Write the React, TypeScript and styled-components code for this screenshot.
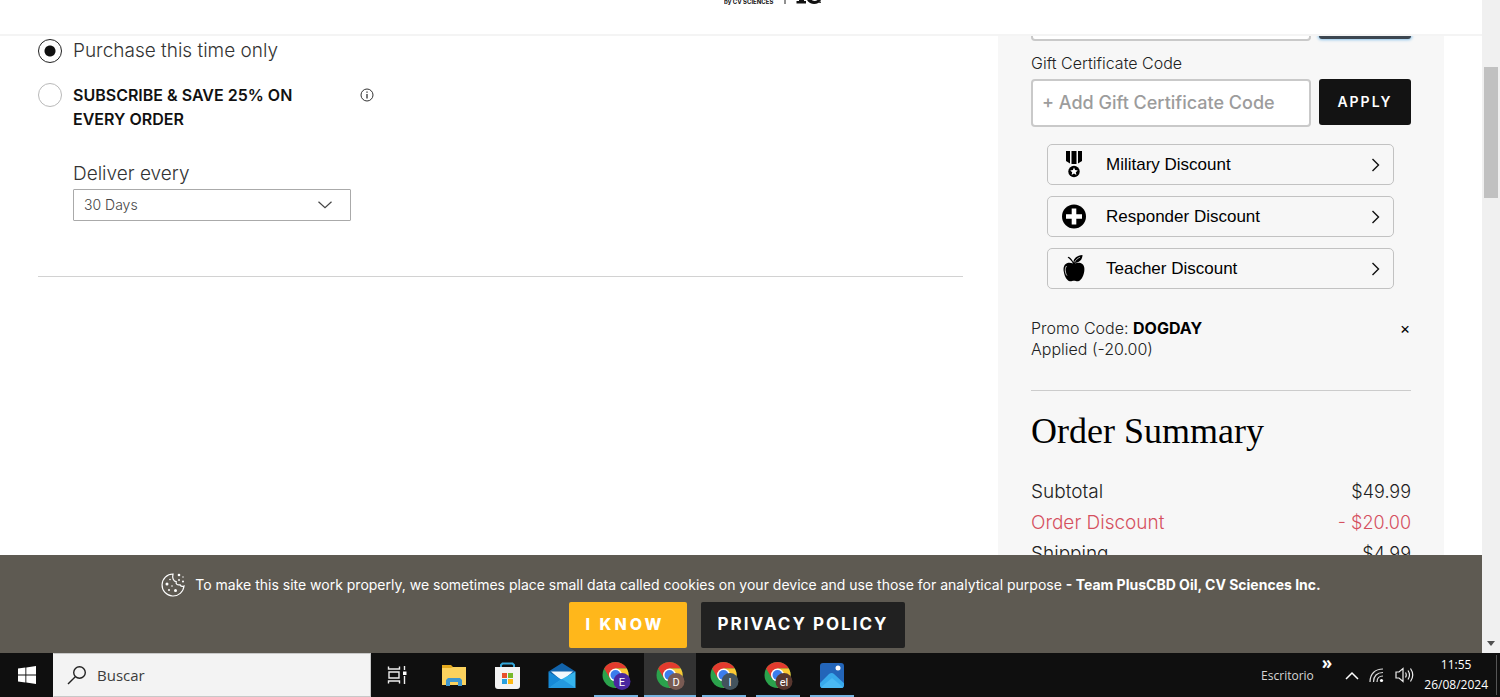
import React from "react";
import styled, { createGlobalStyle } from "styled-components";

const GlobalStyle = createGlobalStyle`
  *, *::before, *::after { box-sizing: border-box; }
  html, body { margin: 0; padding: 0; }
  body { background: #fff; color: #151515; font-family: Inter, "Liberation Sans", sans-serif; }
  button, input, select { font-family: inherit; margin: 0; }
  button { cursor: pointer; }
`;

const Desktop = styled.div`
  display: flex;
  flex-direction: column;
  height: 100vh;
  overflow: hidden;
`;

const Browser = styled.div`
  display: flex;
  flex: 1;
  min-height: 0;
`;

const Page = styled.div`
  display: flex;
  flex-direction: column;
  flex: 1;
  min-width: 0;
  background: #fff;
`;

const Header = styled.header`
  display: flex;
  justify-content: center;
  flex: none;
  height: 36px;
  padding-left: 66px;
  border-bottom: 2px solid #f4f4f4;
`;

const Content = styled.main`
  display: grid;
  grid-template-columns: minmax(0, 1fr) 446px;
  gap: 35px;
  flex: 1;
  min-height: 0;
  padding: 0 38px;
  overflow: hidden;
`;

const CartColumn = styled.section`
  padding-top: 3px;
`;

const Options = styled.div`
  display: flex;
  flex-direction: column;
  gap: 20px;
  height: 238px;
  border-bottom: 1px solid #d2d2d2;
`;

const Option = styled.div`
  display: flex;
  align-items: flex-start;
  gap: 11px;
`;

const Radio = styled.input`
  appearance: none;
  flex: none;
  width: 24px;
  height: 24px;
  border: 1px solid #b9b9b9;
  border-radius: 50%;
  background: #fff;
  &:checked {
    border-color: #222;
    background: radial-gradient(circle, #111 5px, #fff 6px);
  }
`;

const OptionLabel = styled.label<{ $strong?: boolean }>`
  width: 276px;
  padding-right: 20px;
  font-size: ${(p) => (p.$strong ? 16 : 19)}px;
  font-weight: ${(p) => (p.$strong ? 600 : 300)};
  line-height: 24px;
  color: ${(p) => (p.$strong ? "#111" : "#333")};
`;

const InfoButton = styled.button`
  display: flex;
  padding: 5px 0;
  border: 0;
  background: none;
  color: #333;
`;

const Delivery = styled.div`
  display: flex;
  flex-direction: column;
  gap: 3px;
  width: 278px;
  margin: 11px 0 0 35px;
`;

const DeliveryLabel = styled.label`
  font-size: 19px;
  font-weight: 300;
  line-height: 24px;
  color: #333;
`;

const SelectBox = styled.div`
  display: grid;
  align-items: center;
  > * { grid-area: 1 / 1; }
  > svg { justify-self: end; margin-right: 19px; pointer-events: none; }
`;

const Select = styled.select`
  appearance: none;
  width: 100%;
  height: 32px;
  padding: 0 10px 2px;
  border: 1px solid #aaa;
  border-radius: 1px;
  background: #fff;
  color: #444;
  font-size: 14px;
  font-weight: 300;
`;

const Sidebar = styled.aside`
  padding: 0 33px;
  background: #f7f7f7;
`;

const ClippedRow = styled.div`
  display: flex;
  flex-direction: column;
  justify-content: flex-end;
  height: 5px;
`;

const CodeRow = styled.div`
  display: flex;
  align-items: flex-start;
  justify-content: space-between;
  gap: 8px;
`;

const CodeLabel = styled.label`
  display: block;
  padding: 12px 0 6px;
  font-size: 16px;
  font-weight: 300;
  line-height: 20px;
  color: #222;
`;

const CodeInput = styled.input`
  flex: 1;
  min-width: 0;
  height: 48px;
  padding: 0 9px 2px;
  border: 2px solid #c9c9c9;
  border-radius: 4px;
  background: #fff;
  font-size: 18px;
  font-weight: 500;
  &::placeholder { color: #9c9c9c; opacity: 1; }
`;

const ApplyButton = styled.button<{ $focused?: boolean }>`
  flex: none;
  width: 92px;
  height: 46px;
  padding: 0 0 2px;
  border: 0;
  border-radius: 3px;
  background: ${(p) => (p.$focused ? "#3c4650" : "#131313")};
  box-shadow: ${(p) => (p.$focused ? "0 0 3px 1px #8fc4ea" : "none")};
  color: #fff;
  font-size: 14px;
  font-weight: 600;
  letter-spacing: 2px;
`;

const DiscountList = styled.div`
  display: flex;
  flex-direction: column;
  gap: 11px;
  padding: 17px 17px 29px 16px;
`;

const DiscountButton = styled.button`
  display: grid;
  grid-template-columns: 28px 1fr 12px;
  align-items: center;
  column-gap: 18px;
  height: 41px;
  padding: 0 10px 0 12px;
  border: 1px solid #c2c2c2;
  border-radius: 5px;
  background: #f7f7f7;
  color: #000;
  font-family: "Liberation Sans", Arial, sans-serif;
  font-size: 17px;
  text-align: left;
`;

const Promo = styled.div`
  display: flex;
  justify-content: space-between;
  align-items: flex-start;
  height: 73px;
  border-bottom: 1px solid #ccc;
`;

const PromoText = styled.p`
  width: 190px;
  margin: 0;
  font-size: 16px;
  font-weight: 300;
  line-height: 21px;
  color: #222;
  strong { color: #000; font-weight: 700; }
`;

const RemoveButton = styled.button`
  width: 12px;
  padding: 0;
  border: 0;
  background: none;
  font-size: 16px;
  line-height: 20px;
`;

const SummaryTitle = styled.h2`
  margin: 0;
  padding: 20px 0 25px;
  color: #000;
  font-family: "Liberation Serif", serif;
  font-size: 36px;
  font-weight: 400;
  line-height: 40px;
`;

const SummaryRow = styled.div<{ $discount?: boolean }>`
  display: flex;
  justify-content: space-between;
  font-size: 19px;
  font-weight: 300;
  line-height: 31px;
  color: ${(p) => (p.$discount ? "#d5505f" : "#222")};
`;

const Amount = styled.span`
  font-size: 18px;
`;

const CookieBanner = styled.section`
  display: flex;
  flex-direction: column;
  align-items: center;
  flex: none;
  gap: 4px;
  padding: 17px 0 5px;
  background: #5e5a52;
  color: #fff;
`;

const CookieText = styled.p`
  display: flex;
  align-items: center;
  gap: 10px;
  margin: 0;
  font-size: 14px;
  font-weight: 400;
  line-height: 26px;
  white-space: nowrap;
  strong { font-weight: 700; }
`;

const BannerActions = styled.div`
  display: flex;
  gap: 14px;
  padding-right: 8px;
`;

const BannerButton = styled.button<{ $primary?: boolean }>`
  width: ${(p) => (p.$primary ? 118 : 204)}px;
  height: 46px;
  padding: ${(p) => (p.$primary ? "0 6px 2px 0" : "0 0 2px")};
  border: 0;
  border-radius: 2px;
  background: ${(p) => (p.$primary ? "#ffb71b" : "#212121")};
  color: #fff;
  font-size: ${(p) => (p.$primary ? 16 : 17)}px;
  font-weight: ${(p) => (p.$primary ? 800 : 700)};
  letter-spacing: ${(p) => (p.$primary ? 3 : 2)}px;
  white-space: nowrap;
`;

const ScrollTrack = styled.div`
  display: flex;
  flex-direction: column;
  justify-content: space-between;
  align-items: center;
  width: 18px;
  padding: 67px 0 7px;
  background: #f0f0f0;
`;

const ScrollThumb = styled.div`
  width: 14px;
  height: 131px;
  background: #c1c1c1;
`;

const Taskbar = styled.footer`
  display: flex;
  flex: none;
  height: 44px;
  background: #0f0f0f;
  color: #fff;
  font-family: "Open Sans", "Noto Sans", sans-serif;
`;

const StartButton = styled.button`
  display: grid;
  place-items: center;
  width: 53px;
  padding: 0;
  border: 0;
  background: none;
`;

const SearchBox = styled.label`
  display: flex;
  align-items: center;
  gap: 10px;
  width: 318px;
  padding-left: 13px;
  border: 1px solid #c8c8c8;
  border-left-color: #f3f3f3;
  background: #f3f3f3;
`;

const SearchInput = styled.input`
  flex: 1;
  min-width: 0;
  padding: 0;
  border: 0;
  background: none;
  font-size: 15px;
  &::placeholder { color: #3c3c3c; opacity: 1; }
`;

const Apps = styled.nav`
  display: flex;
  gap: 2px;
  flex: 1;
  padding-left: 3px;
`;

const AppButton = styled.button<{ $active?: boolean; $open?: boolean }>`
  display: flex;
  flex-direction: column;
  align-items: center;
  justify-content: space-between;
  width: 52px;
  padding: 8px 0 0;
  border: 0;
  background: ${(p) => (p.$active ? "#333" : "none")};
  &::after {
    content: "";
    width: ${(p) => (p.$active ? 52 : 44)}px;
    height: 2px;
    background: ${(p) => (p.$open ? "#76b3e0" : "none")};
  }
`;

const Tray = styled.div`
  display: flex;
  align-items: center;
  padding-right: 3px;
  font-size: 12px;
`;

const TrayLabel = styled.span`
  color: #d6d6d6;
  font-size: 12px;
`;

const TrayMore = styled.span`
  align-self: flex-start;
  padding: 0 13px 0 8px;
  font-size: 17px;
  font-weight: 700;
  line-height: 20px;
`;

const TrayIcons = styled.div`
  display: flex;
  align-items: center;
  gap: 10px;
  padding-right: 9px;
`;

const Clock = styled.div`
  padding-right: 8px;
  border-right: 1px solid #555;
  font-size: 12px;
  line-height: 20px;
  text-align: center;
`;

const Logo = () => (
  <svg width="100" height="8" viewBox="0 0 100 8" aria-label="CV Sciences">
    <text x="0" y="4" fontSize="6" fontWeight="700" fontFamily="Inter, sans-serif" fill="#111">by CV SCIENCES</text>
    <path d="M61 0v4" stroke="#222" strokeWidth="1" />
    <path d="M75 0h5v1h2v2.500h-9.500V1H75z M83 0h5c1 1.200 4 1.200 5.500 0H97c-2 5-11 5.600-14 0z" fill="#111" />
    <path d="M95 1.500h2v1.500h-2z" fill="#444" />
  </svg>
);

const Chevron = () => (
  <svg width="9" height="14" viewBox="0 0 9 14" fill="none" stroke="#111" strokeWidth="1.4"><path d="M1.500 1 7.500 7l-6 6" /></svg>
);

const Medal = () => (
  <svg width="28" height="28" viewBox="0 0 28 28">
    <path d="M6 0h4v12.500L6 10zM11.500 0h5v13h-5zM18 0h4v10l-4 2.500z" fill="#000" />
    <circle cx="14" cy="20.500" r="5.700" fill="#000" />
    <path d="m14 16.600 1.100 2.500 2.700.3-2 1.800.6 2.700-2.400-1.400-2.400 1.400.6-2.700-2-1.800 2.700-.3z" fill="#fff" />
  </svg>
);

const Plus = () => (
  <svg width="28" height="28" viewBox="0 0 28 28">
    <circle cx="14" cy="13.500" r="12" fill="#000" />
    <path d="M14 5.500v16M6 13.500h16" stroke="#fff" strokeWidth="4.600" />
  </svg>
);

const Apple = () => (
  <svg width="28" height="28" viewBox="0 0 28 28">
    <path d="M13 8.500C11 5.300 9.500 3.500 7.600 2.500l1.100-.8c2 1.200 3.500 3 4.700 5.600C13.500 3.500 17 .3 22.500 0 22.500 4.500 19.500 7.500 14.500 8.100c1.600.4 3-.7 5.200-.3 4.200.8 5.300 4.700 4.500 9-.8 4.700-3.300 9.200-6.200 9.500-1.600.2-2.300-.5-4-.5s-2.400.7-4 .5c-3-.3-5.400-4.800-6.200-9.500-.8-4.300.3-8.200 4.500-9 1.900-.3 3.200.3 4.700.7z" fill="#000" />
    <path d="M14.500 7.300c1.200-2.400 3-4 5.400-5" fill="none" stroke="#f7f7f7" strokeWidth=".7" />
    <path d="M6.500 11c-2 2.800-1.300 7 .4 9.500" fill="none" stroke="#f7f7f7" strokeWidth=".8" />
  </svg>
);

const Cookie = () => (
  <svg width="24" height="24" viewBox="0 0 24 24" fill="none" stroke="#fff" strokeWidth="1.2">
    <path d="M12 1A11 11 0 1 0 23 13c-2 .8-3.500.1-4-1.300-2.500.8-4.500-.7-3.800-3C12.500 8.300 11 5 12 1z" />
    <g fill="#fff" stroke="none"><circle cx="6" cy="11" r="1.500" /><circle cx="8" cy="17" r="1" /><circle cx="14.500" cy="17.500" r="1.500" /><circle cx="11" cy="13" r=".8" /><circle cx="9" cy="6.500" r=".8" /><circle cx="18" cy="2" r="1.300" /><circle cx="22" cy="4" r=".7" /><circle cx="18" cy="7" r=".9" /><circle cx="22" cy="8.500" r="1" /></g>
  </svg>
);

const TaskView = () => (
  <svg width="30" height="30" viewBox="0 0 30 30" fill="none" stroke="#eee" strokeWidth="1.400">
    <path d="M3.500 5.500V8h11V5.500M3.500 22.500V20h11v2.500M4 11h10v6H4zM19.500 5v4M19.500 15v8" /><path d="M18 10.500h3.500V14H18z" fill="#fff" stroke="none" />
  </svg>
);

const Explorer = () => (
  <svg width="30" height="30" viewBox="0 0 30 30">
    <path d="M3 4h9l2 2h12v4H3z" fill="#e4a91d" /><path d="M3 7h9l2-1h13v18H3z" fill="#fbd25d" />
    <path d="M7 25v-6l2-2h12l2 2v6h-4v-4h-8v4z" fill="#3f97cf" />
  </svg>
);

const Store = () => (
  <svg width="30" height="30" viewBox="0 0 30 30">
    <path d="M8 8V4l1.500-1.500h10L21 4v4" fill="none" stroke="#34a7d9" strokeWidth="2" />
    <path d="M2 6h25v19q0 3-3 3H5q-3 0-3-3z" fill="#f3f3f3" />
    <path d="M9 12h5v5H9z" fill="#e8502c" /><path d="M15 12h5v5h-5z" fill="#76b82a" /><path d="M9 18h5v5H9z" fill="#28a1e0" /><path d="M15 18h5v5h-5z" fill="#fdb813" />
  </svg>
);

const Mail = () => (
  <svg width="30" height="30" viewBox="0 0 30 30">
    <path d="M1.500 10.500 15 2l13.500 8.500L15 20z" fill="#1263aa" /><path d="M4 10.500h22L15 20z" fill="#f2f8fc" />
    <path d="M1.500 10.500 15 19 1.500 27z" fill="#1689d7" /><path d="M28.500 10.500 15 18 1.500 27h27z" fill="#35b4ee" /><path d="m15 18 13.500 9h-27z" fill="#2499e0" />
  </svg>
);

const Chrome = ({ tag, color }: { tag: string; color: string }) => (
  <svg width="30" height="30" viewBox="0 0 30 30">
    <circle cx="14.500" cy="14" r="13" fill="#2ba24c" />
    <path d="M3.200 7.500A13 13 0 0 1 25.800 7.500H14.500L8.900 17.200z" fill="#e33b2e" />
    <path d="M25.800 7.500A13 13 0 0 1 14.500 27L20.100 17.200 14.500 7.500z" fill="#fcc934" />
    <circle cx="14.500" cy="14" r="6.500" fill="#fff" /><circle cx="14.500" cy="14" r="5" fill="#3b7ded" />
    <circle cx="21" cy="20.500" r="8.500" fill={color} />
    <text x="21" y="24.500" textAnchor="middle" fontSize="11" fontFamily="Roboto, sans-serif" fill="#fff">{tag}</text>
  </svg>
);

const Photos = () => (
  <svg width="30" height="30" viewBox="0 0 30 30">
    <defs><clipPath id="photo"><rect x="3" y="2" width="24" height="25" rx="3" /></clipPath></defs>
    <g clipPath="url(#photo)"><path d="M3 2h24v25H3z" fill="#2365b9" /><path d="M0 25 12 13q3-2 5 0l12 11v4H3z" fill="#38a9eb" /><path d="M3 27 15 17l12 10z" fill="#4ab8f2" /></g>
    <circle cx="21" cy="7" r="2.500" fill="#fff" />
  </svg>
);

const discounts = [
  { name: "Military Discount", icon: <Medal /> },
  { name: "Responder Discount", icon: <Plus /> },
  { name: "Teacher Discount", icon: <Apple /> },
];

const apps = [
  { name: "Task view", icon: <TaskView /> },
  { name: "File Explorer", icon: <Explorer /> },
  { name: "Store", icon: <Store /> },
  { name: "Mail", icon: <Mail /> },
  { name: "Chrome E", icon: <Chrome tag="E" color="#4927a0" />, open: true },
  { name: "Chrome D", icon: <Chrome tag="D" color="#795b53" />, open: true, active: true },
  { name: "Chrome I", icon: <Chrome tag="I" color="#43535d" />, open: true },
  { name: "Chrome el", icon: <Chrome tag="el" color="#58372f" />, open: true },
  { name: "Photos", icon: <Photos />, open: true },
];

export default function App() {
  return (
    <Desktop>
      <GlobalStyle />
      <Browser>
        <Page>
          <Header><Logo /></Header>
          <Content>
            <CartColumn>
              <Options>
                <Option>
                  <Radio type="radio" id="once" name="plan" defaultChecked />
                  <OptionLabel htmlFor="once">Purchase this time only</OptionLabel>
                </Option>
                <Option>
                  <Radio type="radio" id="subscribe" name="plan" />
                  <OptionLabel htmlFor="subscribe" $strong>SUBSCRIBE &amp; SAVE 25% ON EVERY ORDER</OptionLabel>
                  <InfoButton aria-label="Subscription details">
                    <svg width="14" height="14" viewBox="0 0 14 14" fill="none" stroke="currentColor"><circle cx="7" cy="7" r="6" /><path d="M7 6v4.500M7 3.500v1.300" strokeWidth="1.300" /></svg>
                  </InfoButton>
                </Option>
                <Delivery>
                  <DeliveryLabel htmlFor="frequency">Deliver every</DeliveryLabel>
                  <SelectBox>
                    <Select id="frequency"><option>30 Days</option></Select>
                    <svg width="14" height="8" viewBox="0 0 14 8" fill="none" stroke="#444" strokeWidth="1.200"><path d="m.5.8 6.500 6 6.500-6" /></svg>
                  </SelectBox>
                </Delivery>
              </Options>
            </CartColumn>
            <Sidebar>
              <ClippedRow>
                <CodeRow>
                  <CodeInput aria-label="Promo code" />
                  <ApplyButton $focused aria-label="Apply promo code" />
                </CodeRow>
              </ClippedRow>
              <CodeLabel htmlFor="gift">Gift Certificate Code</CodeLabel>
              <CodeRow>
                <CodeInput id="gift" placeholder="+ Add Gift Certificate Code" />
                <ApplyButton>APPLY</ApplyButton>
              </CodeRow>
              <DiscountList>
                {discounts.map((d) => (
                  <DiscountButton key={d.name}>{d.icon}<span>{d.name}</span><Chevron /></DiscountButton>
                ))}
              </DiscountList>
              <Promo>
                <PromoText>Promo Code: <strong>DOGDAY</strong><br />Applied (-20.00)</PromoText>
                <RemoveButton aria-label="Remove promo code">×</RemoveButton>
              </Promo>
              <SummaryTitle>Order Summary</SummaryTitle>
              <SummaryRow><span>Subtotal</span><Amount>$49.99</Amount></SummaryRow>
              <SummaryRow $discount><span>Order Discount</span><Amount>- $20.00</Amount></SummaryRow>
              <SummaryRow><span>Shipping</span><Amount>$4.99</Amount></SummaryRow>
            </Sidebar>
          </Content>
          <CookieBanner aria-label="Cookies">
            <CookieText>
              <Cookie />
              <span>To make this site work properly, we sometimes place small data called cookies on your device and use those for analytical purpose <strong>- Team PlusCBD Oil, CV Sciences Inc.</strong></span>
            </CookieText>
            <BannerActions>
              <BannerButton $primary>I KNOW</BannerButton>
              <BannerButton>PRIVACY POLICY</BannerButton>
            </BannerActions>
          </CookieBanner>
        </Page>
        <ScrollTrack>
          <ScrollThumb />
          <svg width="8" height="5" viewBox="0 0 8 5"><path d="M0 0h8L4 5z" fill="#505050" /></svg>
        </ScrollTrack>
      </Browser>
      <Taskbar>
        <StartButton aria-label="Start">
          <svg width="18" height="18" viewBox="0 0 18 18" fill="#fff"><path d="M0 2.500 7.400 1.500v7H0zM8.300 1.400 18 0v8.500H8.300zM0 9.400h7.400v7L0 15.400zM8.300 9.400H18V18l-9.700-1.400z" /></svg>
        </StartButton>
        <SearchBox>
          <svg width="20" height="20" viewBox="0 0 20 20" fill="none" stroke="#222" strokeWidth="1.400"><circle cx="12.500" cy="7.500" r="5.800" /><path d="M8.300 11.800 1 19" /></svg>
          <SearchInput type="text" placeholder="Buscar" aria-label="Buscar" />
        </SearchBox>
        <Apps>
          {apps.map((a) => (
            <AppButton key={a.name} aria-label={a.name} $open={a.open} $active={a.active}>{a.icon}</AppButton>
          ))}
        </Apps>
        <Tray>
          <TrayLabel>Escritorio</TrayLabel>
          <TrayMore>»</TrayMore>
          <TrayIcons>
            <svg width="14" height="9" viewBox="0 0 14 9" fill="none" stroke="#fff" strokeWidth="1.500"><path d="m1 8 6-6 6 6" /></svg>
            <svg width="16" height="16" viewBox="0 0 16 16" fill="none" stroke="#ddd" strokeWidth="1.200"><path d="M1 15C1 7 6 2 14 2M4.500 15C4.500 9 8 5.500 14 5.500M8 15c0-4 2-6 6-6" /><circle cx="12.500" cy="13.500" r="1.600" fill="#fff" stroke="none" /></svg>
            <svg width="20" height="16" viewBox="0 0 20 16" fill="none" stroke="#eee" strokeWidth="1.200"><path d="M1 5h3l4-3.500v13L4 11H1zM10.500 5.500q1.500 2.500 0 5M13 3.500q3 4.500 0 9M15.500 1.500q4.500 6.500 0 13" /></svg>
          </TrayIcons>
          <Clock>11:55<br />26/08/2024</Clock>
        </Tray>
      </Taskbar>
    </Desktop>
  );
}
